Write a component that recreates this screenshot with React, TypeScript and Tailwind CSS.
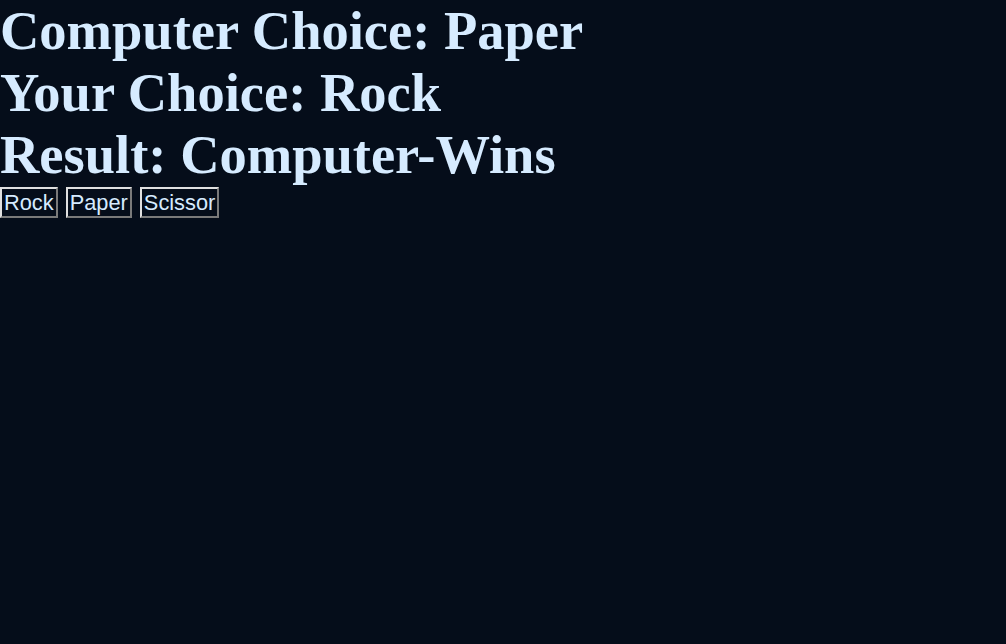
const App = () => {
  const choices = ["Rock", "Paper", "Scissor"];

  return (
    <div className="min-h-screen bg-[#050d1a] text-[#d6ebff]">
      <h1 className="font-['Liberation_Serif',serif] text-[54.5px] font-bold leading-[62px]">
        Computer Choice: Paper
      </h1>
      <h1 className="font-['Liberation_Serif',serif] text-[54.5px] font-bold leading-[62px]">
        Your Choice: Rock
      </h1>
      <h1 className="font-['Liberation_Serif',serif] text-[54.5px] font-bold leading-[62px]">
        Result: Computer-Wins
      </h1>
      <div className="mt-px flex gap-2">
        {choices.map((c) => (
          <button
            key={c}
            className="border-2 border-t-[#e0e0e0] border-l-[#e0e0e0] border-r-[#7a7a7a] border-b-[#7a7a7a] bg-transparent px-[2px] py-[2px] font-['Liberation_Sans',sans-serif] text-[21.8px] leading-[23px] text-[#d6ebff]"
          >
            {c}
          </button>
        ))}
      </div>
    </div>
  );
};

export default App;
